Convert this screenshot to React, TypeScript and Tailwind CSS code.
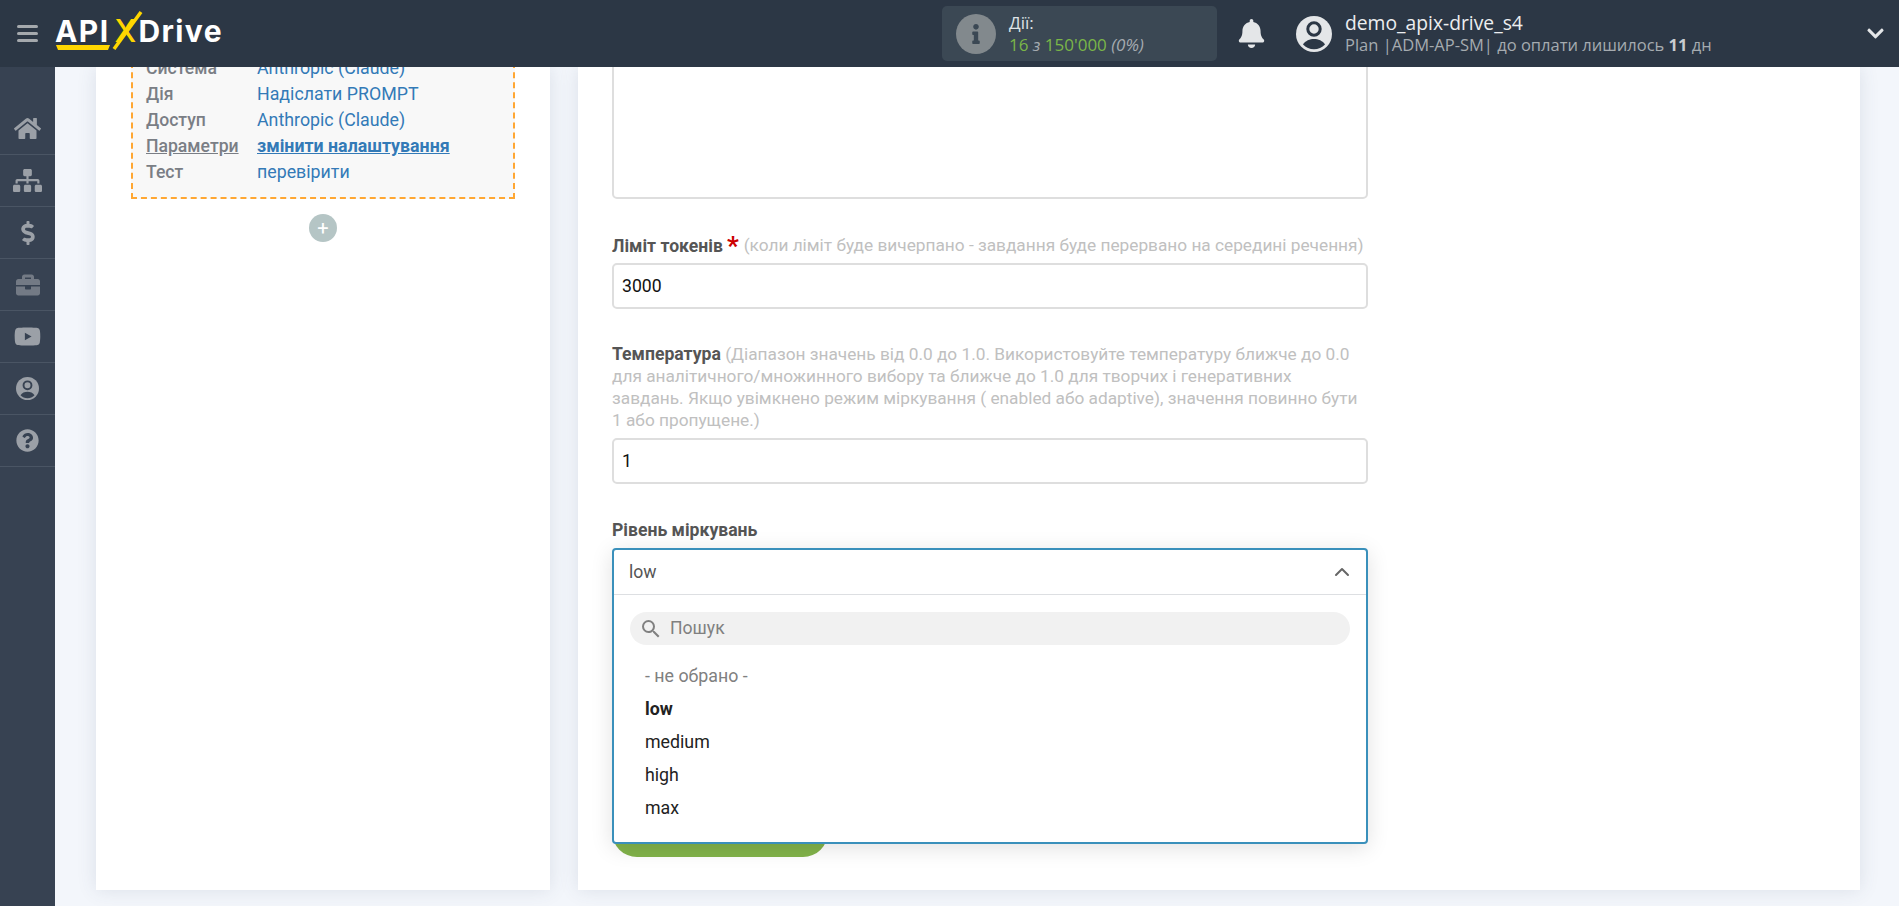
import { FaBell, FaBriefcase, FaChevronDown, FaDollarSign, FaHome, FaInfo, FaQuestionCircle, FaSitemap, FaYoutube } from 'react-icons/fa';
import { FiChevronUp } from 'react-icons/fi';
import { MdSearch } from 'react-icons/md';

function UserIcon({ size, fill, cut }: { size: string; fill: string; cut: string }) {
  return (
    <svg className={`${size} ${fill}`} viewBox="0 0 36 36">
      <circle cx="18" cy="18" r="18" fill="currentColor" />
      <circle cx="18" cy="13" r="6.2" fill="none" className={cut} stroke="currentColor" strokeWidth="3" />
      <path d="M7 28.5c2-3.7 7-5.5 11-5.5s9 1.8 11 5.5c-2.8 3-6.800 4.700-11 4.700s-8.200-1.700-11-4.700z" className={cut} fill="currentColor" />
    </svg>
  );
}

const navItems = [
  { icon: FaHome, size: 'text-[27px]' },
  { icon: FaSitemap, size: 'text-[29px]' },
  { icon: FaDollarSign, size: 'text-[24px]' },
  { icon: FaBriefcase, size: 'text-[24px] opacity-60' },
  { icon: FaYoutube, size: 'text-[27px]' },
  { icon: null, size: '' },
  { icon: FaQuestionCircle, size: 'text-[23px]' },
];

const summary = [
  { label: 'Система', value: 'Anthropic (Claude)' },
  { label: 'Дія', value: 'Надіслати PROMPT' },
  { label: 'Доступ', value: 'Anthropic (Claude)' },
  { label: 'Параметри', value: 'змінити налаштування', active: true },
  { label: 'Тест', value: 'перевірити' },
];

function Logo() {
  return (
    <div className="relative flex h-[40px] w-[168px] items-center pb-[6px] text-[30px] font-bold leading-none text-white [font-family:Inter,sans-serif]">
      <span className="tracking-[1.4px]">API</span>
      <span className="ml-[5px] w-[25px] text-[31px] font-medium text-[#ffd600]">X</span>
      <span className="tracking-[1.4px]">Drive</span>
      <svg className="absolute left-0 top-0 h-[40px] w-[168px] overflow-visible" viewBox="0 0 168 40" fill="none">
        <path d="M1 31h54l-2 5H3z" fill="#ffd600" />
        <path d="M59 35 86 -2" stroke="#ffd600" strokeWidth="3.500" />
      </svg>
    </div>
  );
}

function Header() {
  return (
    <header className="flex h-[67px] shrink-0 items-center bg-[#2c3745] [font-family:'Open_Sans',sans-serif]">
      <div className="ml-[17px] flex w-[21px] flex-col gap-[4px]">
        <div className="h-[3px] rounded-sm bg-[#a5a9ad]" />
        <div className="h-[3px] rounded-sm bg-[#a5a9ad]" />
        <div className="h-[3px] rounded-sm bg-[#a5a9ad]" />
      </div>
      <div className="ml-[17px]">
        <Logo />
      </div>
      <div className="ml-[719px] flex h-[55px] w-[275px] items-center rounded-[5px] bg-[#3b4854] pl-[14px]">
        <div className="flex h-[40px] w-[40px] items-center justify-center rounded-full bg-[#82898d] text-[#3b4854]">
          <FaInfo className="text-[20px]" />
        </div>
        <div className="ml-[13px] text-[17px] leading-[22px]">
          <div className="text-[#dfe3e6]">Дії:</div>
          <div className="text-[#7ab648]">
            16 <span className="italic text-[#a5abb0]">з</span> 150'000 <span className="italic text-[#a5abb0]">(0%)</span>
          </div>
        </div>
      </div>
      <FaBell className="ml-[20px] text-[29px] text-[#e4e6e8]" />
      <UserIcon size="ml-[30px] h-[36px] w-[36px] shrink-0" fill="text-[#e4e6e8]" cut="text-[#2c3745]" />
      <div className="ml-[13px] leading-[22px]">
        <div className="text-[19.300px] text-[#eceef0]">demo_apix-drive_s4</div>
        <div className="text-[16.500px] text-[#a5abb0]">
          Plan |ADM-AP-SM| до оплати лишилось <b className="font-bold text-[#c8ccd0]">11</b> дн
        </div>
      </div>
      <FaChevronDown className="ml-auto mr-[14px] text-[19px] text-[#e4e6e8]" />
    </header>
  );
}

function Sidebar() {
  return (
    <aside className="flex w-[55px] shrink-0 flex-col bg-[#374252] pt-[36px]">
      {navItems.map((item, i) => (
        <div key={i} className="flex h-[52px] items-center justify-center border-b border-[#4a5564] text-[#9ba0a7]">
          {item.icon ? <item.icon className={item.size} /> : <UserIcon size="h-[23px] w-[23px]" fill="text-[#9ba0a7]" cut="text-[#374252]" />}
        </div>
      ))}
    </aside>
  );
}

function LeftCard() {
  return (
    <section className="w-[454px] shrink-0 bg-white px-[35px] shadow-[0_0_18px_rgba(60,80,110,0.13)]">
      <div className="-mt-[15px] h-[147px] border-2 border-dashed border-[#ffa733] bg-[#f8f8f8] px-[13px] pt-[1px] text-[17.800px] leading-[26px]">
        {summary.map((row) => (
          <div key={row.label} className="flex">
            <span className={`w-[111px] text-[17.600px] font-medium text-[#7a7e85] ${row.active ? 'underline' : ''}`}>{row.label}</span>
            <span className={`text-[#337ab7] ${row.active ? 'font-bold underline' : ''}`}>{row.value}</span>
          </div>
        ))}
      </div>
      <div className="mx-auto mt-[15px] flex h-[28px] w-[28px] items-center justify-center rounded-full bg-[#b5c5c5] text-[20px] leading-none text-white">
        +
      </div>
    </section>
  );
}

function TextInput({ value }: { value: string }) {
  return (
    <div className="flex h-[46px] items-center rounded-[5px] border-2 border-[#dedede] bg-white px-[8px] text-[17.600px] text-[#111]">
      {value}
    </div>
  );
}

function SelectDropdown() {
  const options = ['medium', 'high', 'max'];
  return (
    <div className="absolute inset-x-0 top-0 z-10 h-[296px] rounded-[4px] border-2 border-[#3a90bb] bg-white shadow-[0_4px_22px_rgba(0,0,0,0.12)]">
      <div className="flex h-[45px] items-center justify-between border-b border-[#dddfe2] pl-[15px] pr-[12px] text-[17.600px] text-[#555]">
        <span>low</span>
        <FiChevronUp className="text-[24px] text-[#666]" />
      </div>
      <div className="mx-[16px] mt-[17px] flex h-[33px] items-center rounded-full bg-[#f1f1f1] pl-[9px] text-[17.600px] text-[#808080]">
        <MdSearch className="mr-[7px] text-[24px] text-[#808080]" />
        Пошук
      </div>
      <div className="mt-[14px] px-[31px] text-[17.800px] leading-[33px] text-[#222]">
        <div className="text-[#808080]">- не обрано -</div>
        <div className="font-bold">low</div>
        {options.map((o) => (
          <div key={o}>{o}</div>
        ))}
      </div>
    </div>
  );
}

function RightCard() {
  return (
    <section className="w-[1282px] shrink-0 bg-white px-[34px] shadow-[0_0_18px_rgba(60,80,110,0.13)]">
      <div className="w-[756px]">
        <div className="-mt-[10px] h-[142px] rounded-[5px] border-2 border-[#dedede] bg-white" />
        <div className="mt-[31px] flex h-[32px] items-center whitespace-nowrap text-[17.250px]">
          <span className="text-[17.600px] font-bold text-[#555]">Ліміт токенів</span>
          <span className="ml-[4px] text-[26px] font-bold leading-none text-[#cc0000]">*</span>
          <span className="ml-[5px] text-[#c0c0c0]">(коли ліміт буде вичерпано - завдання буде перервано на середині речення)</span>
        </div>
        <div className="mt-[1px]">
          <TextInput value="3000" />
        </div>
        <p className="mt-[34px] mb-[7px] text-[17.250px] leading-[22px] text-[#c0c0c0]">
          <span className="text-[17.600px] font-bold text-[#555]">Температура</span> (Діапазон значень від 0.0 до 1.0. Використовуйте температуру ближче до 0.0
          <br />
          для аналітичного/множинного вибору та ближче до 1.0 для творчих і генеративних
          <br />
          завдань. Якщо увімкнено режим міркування ( enabled або adaptive), значення повинно бути
          <br />
          1 або пропущене.)
        </p>
        <TextInput value="1" />
        <div className="mt-[35px] mb-[7px] text-[17.600px] font-bold leading-[22px] text-[#555]">Рівень міркувань</div>
        <div className="relative h-[46px]">
          <SelectDropdown />
        </div>
        <div className="mt-[213px] h-[50px] w-[216px] rounded-full bg-[#82b34a]" />
      </div>
    </section>
  );
}

export default function App() {
  return (
    <div className="flex h-[906px] w-full flex-col overflow-hidden bg-[#f3f6fb] [font-family:Roboto,sans-serif]">
      <Header />
      <div className="flex min-h-0 flex-1">
        <Sidebar />
        <main className="flex min-w-0 flex-1 gap-[28px] overflow-hidden pb-[16px] pl-[41px]">
          <LeftCard />
          <RightCard />
        </main>
      </div>
    </div>
  );
}
